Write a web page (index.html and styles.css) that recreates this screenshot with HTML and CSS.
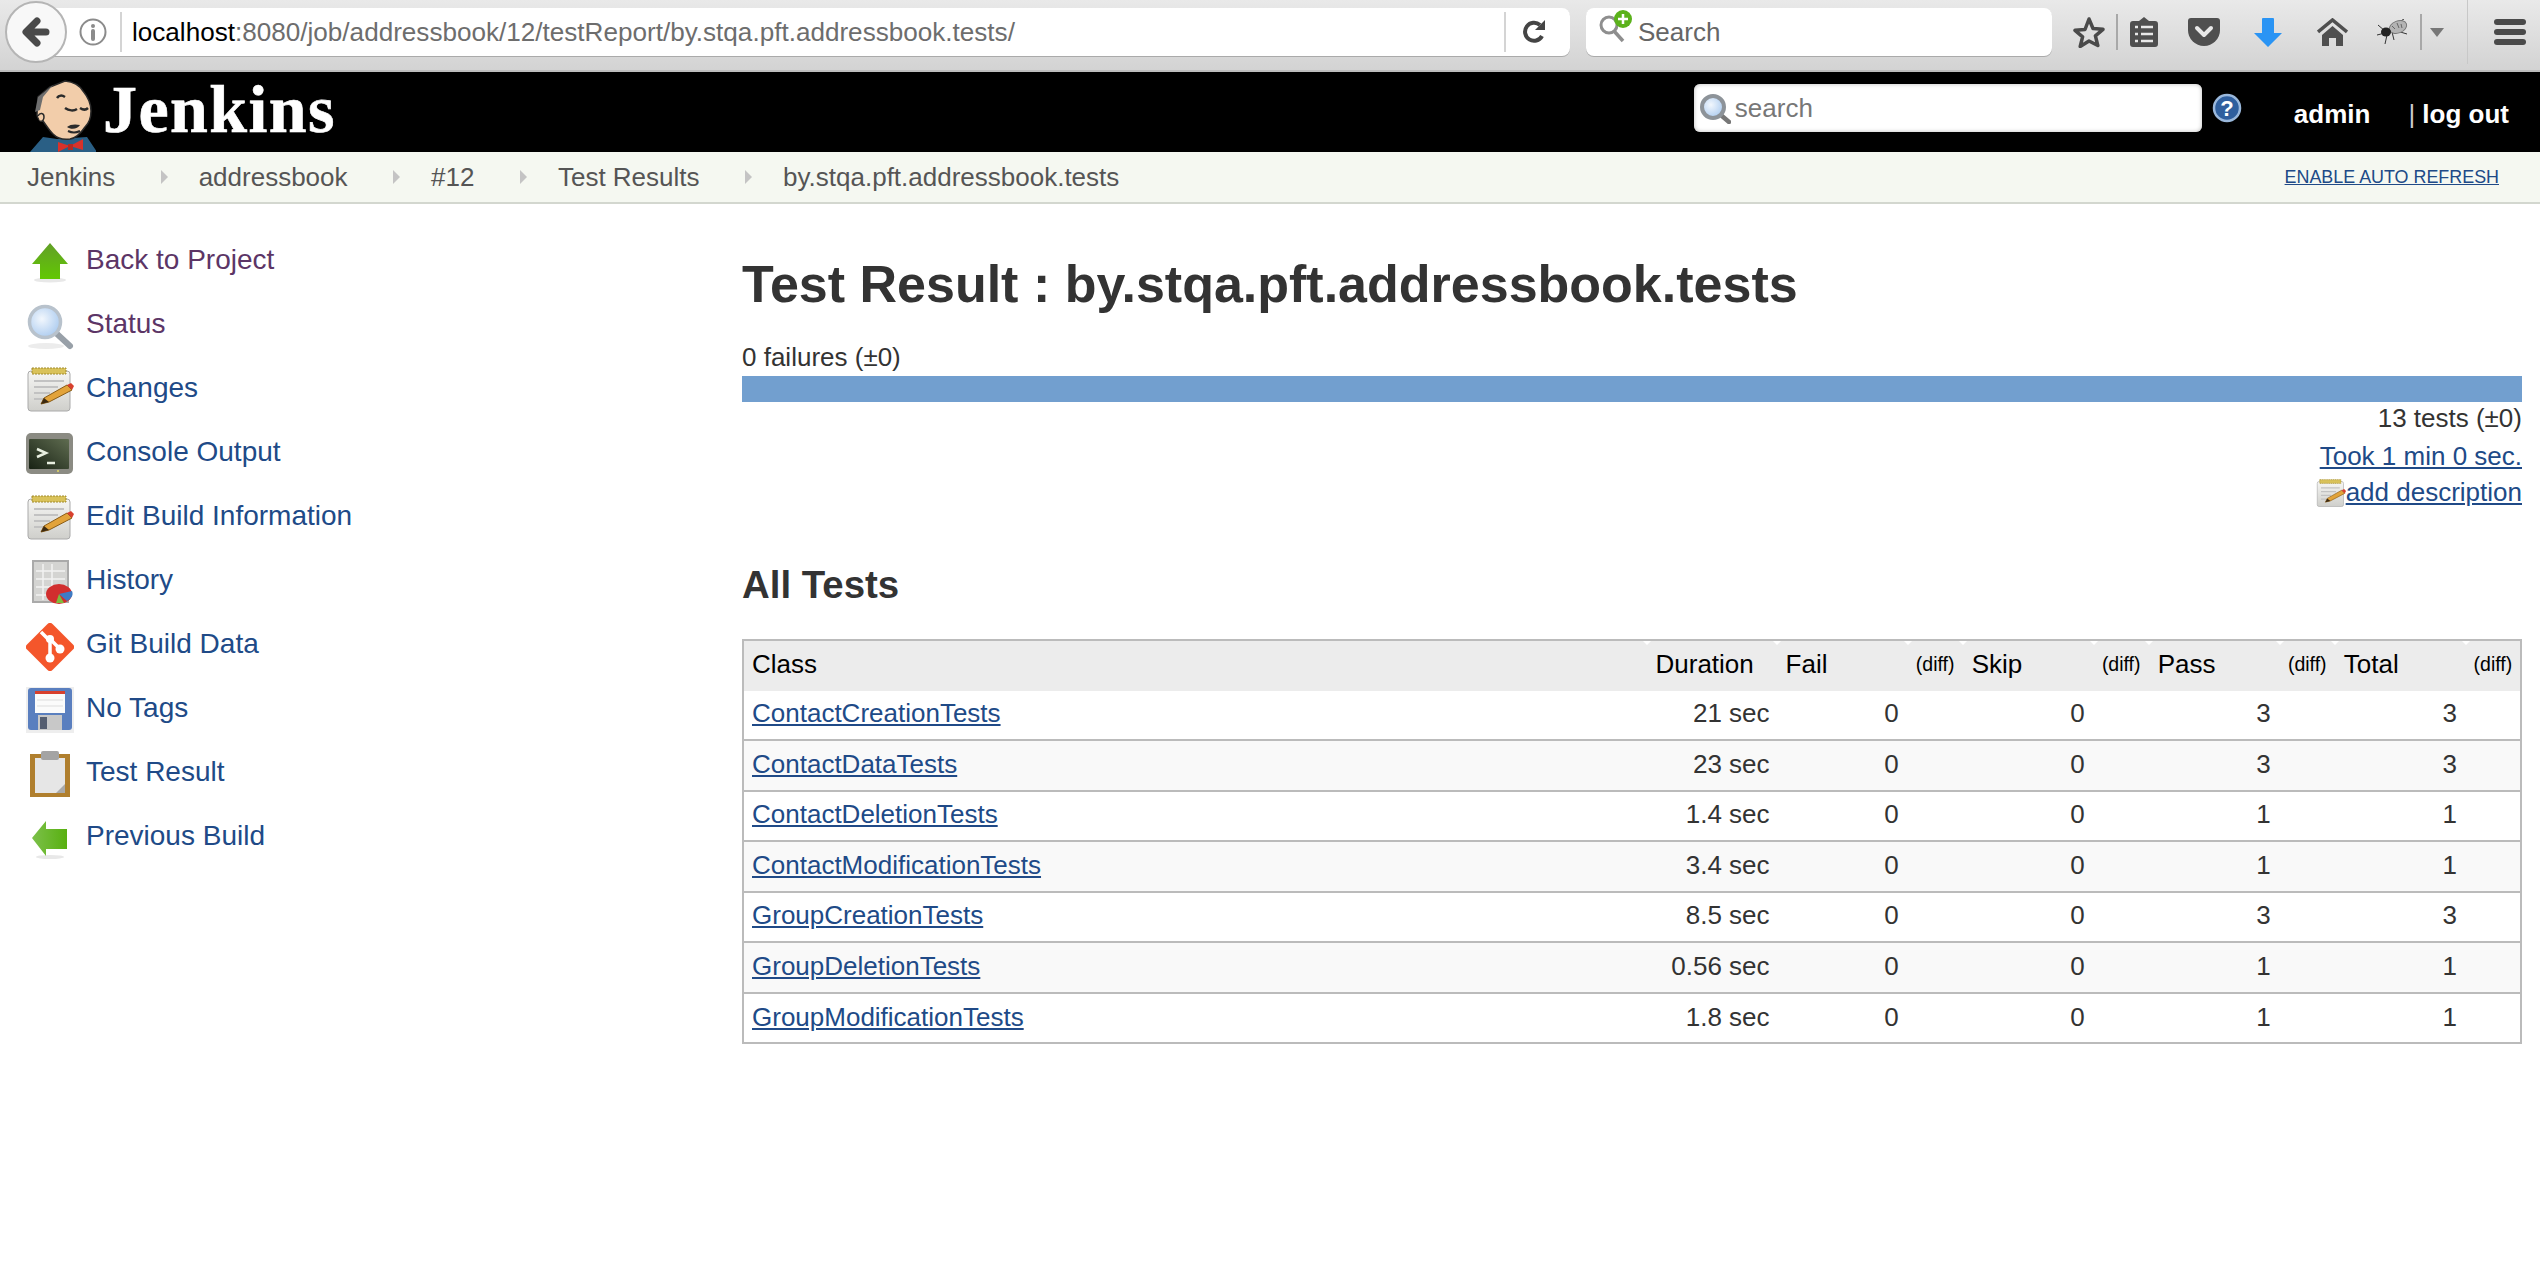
FILE: index.html
```html
<!DOCTYPE html>
<html lang="en">
<head>
	<meta charset="UTF-8">
	<title>by.stqa.pft.addressbook.tests Test Results</title>
	<link rel="stylesheet" href="styles.css">
</head>
<body>

<svg class="defs" width="0" height="0">
	<defs>
		<linearGradient id="greenUp" x1="0" y1="0" x2="0" y2="1"><stop offset="0" stop-color="#629f28"/><stop offset="1" stop-color="#62c802"/></linearGradient>
		<linearGradient id="greenLeft" x1="0" y1="0" x2="1" y2="0"><stop offset="0" stop-color="#7cc04a"/><stop offset="1" stop-color="#58b010"/></linearGradient>
		<linearGradient id="paper" x1="0" y1="0" x2="0" y2="1"><stop offset="0" stop-color="#f6f6f4"/><stop offset="1" stop-color="#cfcfcb"/></linearGradient>
		<linearGradient id="screen" x1="0" y1="1" x2="1" y2="0"><stop offset="0" stop-color="#182214"/><stop offset="1" stop-color="#5f6c50"/></linearGradient>
		<radialGradient id="lens" cx=".4" cy=".4" r=".7"><stop offset="0" stop-color="#f2f7fd"/><stop offset="1" stop-color="#a5c7ee"/></radialGradient>
		<symbol id="notepad" viewBox="0 0 48 48">
			<rect x="2" y="4" width="42" height="40" rx="3" fill="url(#paper)" stroke="#aaa"/>
			<rect x="6" y="1" width="34" height="6" fill="#d9c25a" stroke="#a08a2a" stroke-dasharray="2 1"/>
			<path d="M8 14h30M8 20h24M8 26h16M8 32h10" stroke="#c2c2c2" stroke-width="2"/>
			<path d="M15 37l3-6 23-13 5 5-23 12z" fill="#e2a33a" stroke="#8a5c16"/>
			<path d="M41 18l5 5 2-4-3-3z" fill="#d8402e"/>
			<path d="M15 37l3-6 5 4z" fill="#3c2a12"/>
		</symbol>
		<symbol id="magnifier" viewBox="0 0 48 48">
			<ellipse cx="20" cy="43" rx="18" ry="3" fill="#ececec"/>
			<path d="M30 30l14 13" stroke="#98a0a8" stroke-width="6" stroke-linecap="round"/>
			<circle cx="19" cy="19" r="15.500" fill="url(#lens)" stroke="#b8c2cc" stroke-width="3.500"/>
		</symbol>
	</defs>
</svg>

<div class="chrome">
	<div class="backBtn">
		<svg width="32" height="32" viewBox="0 0 32 32"><path d="M26 16H8M17 5L6 16l11 11" fill="none" stroke="#4a4a4a" stroke-width="7" stroke-linecap="round" stroke-linejoin="round"/></svg>
	</div>
	<div class="urlBar">
		<svg class="infoIcon" width="28" height="28" viewBox="0 0 28 28"><circle cx="14" cy="14" r="12.500" fill="none" stroke="#8b8b8b" stroke-width="2"/><path d="M14 13v8" stroke="#8b8b8b" stroke-width="4" stroke-linecap="round"/><circle cx="14" cy="8" r="2" fill="#8b8b8b"/></svg>
		<span class="urlDivider"></span>
		<span class="urlText"><b>localhost</b>:8080/job/addressbook/12/testReport/by.stqa.pft.addressbook.tests/</span>
		<span class="urlDivider urlDividerEnd"></span>
		<svg class="reloadIcon" width="26" height="26" viewBox="0 0 26 26"><path d="M21 17a9 9 0 1 1-2-11" fill="none" stroke="#444" stroke-width="4"/><path d="M14 11h10V1z" fill="#444"/></svg>
	</div>
	<div class="webSearch">
		<svg class="engineIcon" width="36" height="36" viewBox="0 0 36 36"><circle cx="11" cy="15" r="8" fill="none" stroke="#8e8e8e" stroke-width="3"/><path d="M16 21l9 10" stroke="#8e8e8e" stroke-width="3.500"/><circle cx="25" cy="9" r="9" fill="#5bb21b"/><path d="M25 4v10M20 9h10" stroke="#fff" stroke-width="2.500"/></svg>
		<span>Search</span>
	</div>
	<div class="tools">
		<svg class="tool toolStar" width="32" height="32" viewBox="0 0 32 32"><path d="M16 3l4 9.500 10 .8-7.600 6.500 2.400 9.700L16 25l-8.800 5.500 2.400-9.700L2 14.300l10-.8z" fill="none" stroke="#4a4a4a" stroke-width="3.500" stroke-linejoin="round"/></svg>
		<span class="toolDivider"></span>
		<svg class="tool toolList" width="28" height="30" viewBox="0 0 28 30"><path d="M14 0l5 4h6a3 3 0 0 1 3 3v20a3 3 0 0 1-3 3H3a3 3 0 0 1-3-3V7a3 3 0 0 1 3-3h6z" fill="#4f4f4f"/><path d="M5 10h3M11 10h12M5 17h3M11 17h12M5 24h3M11 24h12" stroke="#e8e8e8" stroke-width="2.500"/></svg>
		<svg class="tool toolPocket" width="32" height="28" viewBox="0 0 32 28"><path d="M3 0h26a3 3 0 0 1 3 3v9a16 16 0 0 1-32 0V3a3 3 0 0 1 3-3z" fill="#4f4f4f"/><path d="M9 10l7 7 7-7" fill="none" stroke="#e8e8e8" stroke-width="4" stroke-linecap="round" stroke-linejoin="round"/></svg>
		<svg class="tool toolDown" width="28" height="29" viewBox="0 0 28 29"><path d="M8 1a1 1 0 0 1 1-1h10a1 1 0 0 1 1 1v14h8L14 29 0 15h8z" fill="#2a94f4"/></svg>
		<svg class="tool toolHome" width="31" height="28" viewBox="0 0 31 28"><path d="M1 14L15.500 2 30 14" fill="none" stroke="#4f4f4f" stroke-width="3.500"/><path d="M15.500 8L26 17v11h-7V20h-7v8H5V17z" fill="#4f4f4f"/></svg>
		<svg class="tool toolBug" width="31" height="26" viewBox="0 0 31 26"><path d="M8 12L1 6M8 14L0 16M10 16L8 25M15 13l2 8M20 12l10 3M22 3l5-3" stroke="#333" fill="none"/><ellipse cx="21" cy="8" rx="9" ry="6" fill="#b4b4b4" stroke="#777" transform="rotate(-20 21 8)"/><path d="M15 7l3 3M20 4l2 5M24 5l1 4" stroke="#666"/><ellipse cx="9" cy="13" rx="5" ry="4.500" fill="#222"/></svg>
		<span class="toolDivider toolDividerBug"></span>
		<span class="toolCaret"></span>
		<span class="toolSep"></span>
		<div class="hamburger"><span></span><span></span><span></span></div>
	</div>
</div>

<div class="header">
	<a class="logo">
		<svg width="68" height="72" viewBox="0 0 68 72">
			<path d="M2 72l13-15 14 2 30-2 10 15z" fill="#2a5f85"/>
			<path d="M22 7L37 1c9 1 15 5 18 10 5 6 8 13 8 20 0 7-2 12-6 16-4 6-9 11-15 12-7 1-13-1-17-5-4-4-7-9-10-13-3 1-5-2-6-6 0-4 0-9 1-18z" fill="#f2cdaa" stroke="#2b2b2b" stroke-width="1.500"/>
			<path d="M25 5L10 17 7 32l5-2 3-13z" fill="#6e6e6e"/>
			<path d="M10 36c2-4 6-3 6 1 0 3-2 5-4 4" fill="#f2cdaa" stroke="#2b2b2b" stroke-width="1.500"/>
			<path d="M29 18c2-3 5-3 8-1" fill="none" stroke="#2b2b2b" stroke-width="2.500"/>
			<path d="M37 28c4 3 9 3 12 1M52 28c3 2 6 2 8 0" fill="none" stroke="#2b2b2b" stroke-width="2.500"/>
			<path d="M39 47c3-3 9-3 13-2-2 4-9 5-13 2z" fill="#2b2b2b"/>
			<path d="M40 51c4 2 8 2 12 0" fill="none" stroke="#2b2b2b" stroke-width="2"/>
			<path d="M30 62l12 4-12 6zM55 59l-13 7 13 4z" fill="#d8322a"/>
			<path d="M40 64h5v6h-5z" fill="#b52a22"/>
		</svg>
		<span class="logoText">Jenkins</span>
	</a>
	<div class="headerSearch">
		<svg width="32" height="32" viewBox="0 0 32 32"><path d="M23 24l7 6" stroke="#777" stroke-width="4.500" stroke-linecap="round"/><circle cx="14" cy="15" r="11" fill="url(#lens)" stroke="#8d9399" stroke-width="4"/></svg>
		<span>search</span>
	</div>
	<svg class="helpIcon" width="30" height="32" viewBox="0 0 30 32"><circle cx="15" cy="16" r="13" fill="#2f5f9e" stroke="#9ab8dc" stroke-width="2.500"/><text x="15" y="24" class="helpMark">?</text></svg>
	<a class="userLink">admin</a>
	<a class="logoutLink"><span class="logoutBar">|</span> log out</a>
</div>

<div class="breadcrumbs">
	<a>Jenkins</a><span class="crumbArrow"></span>
	<a>addressbook</a><span class="crumbArrow"></span>
	<a>#12</a><span class="crumbArrow"></span>
	<a>Test Results</a><span class="crumbArrow"></span>
	<a>by.stqa.pft.addressbook.tests</a>
	<a class="autoRefresh">ENABLE AUTO REFRESH</a>
</div>

<div class="page">
	<div class="sidePanel">
		<a class="task visited">
			<svg width="48" height="48" viewBox="0 0 48 48"><ellipse cx="24" cy="41" rx="16" ry="2.500" fill="#e8e8e8"/><path d="M24 4l18 21H34v15H14V25H6z" fill="url(#greenUp)"/></svg>
			Back to Project
		</a>
		<a class="task visited">
			<svg width="48" height="48" viewBox="0 0 48 48"><use href="#magnifier"/></svg>
			Status
		</a>
		<a class="task">
			<svg width="48" height="48" viewBox="0 0 48 48"><use href="#notepad"/></svg>
			Changes
		</a>
		<a class="task">
			<svg width="48" height="48" viewBox="0 0 48 48"><rect y="2" width="47" height="41" rx="5" fill="#8b8b83"/><rect x="3" y="8" width="40" height="30" rx="1" fill="url(#screen)"/><path d="M11 18l9 4-9 4" fill="none" stroke="#e8efe0" stroke-width="2.500"/><path d="M21 32h8" stroke="#e8efe0" stroke-width="2.500"/><circle cx="32" cy="40" r="1" fill="#e4d860"/></svg>
			Console Output
		</a>
		<a class="task">
			<svg width="48" height="48" viewBox="0 0 48 48"><use href="#notepad"/></svg>
			Edit Build Information
		</a>
		<a class="task">
			<svg width="48" height="48" viewBox="0 0 48 48"><rect x="7" y="2" width="35" height="41" fill="#d4d4d2" stroke="#aaa" stroke-width="2"/><path d="M10 12h29M10 20h29M10 28h29M10 36h29M17 5v36M26 5v36" stroke="#f2f2f2" stroke-width="1.500"/><ellipse cx="33" cy="35" rx="13" ry="10" fill="#d12e2e"/><path d="M33 35l13-3a13 9 0 0 1-5 10z" fill="#3e7bc4"/><path d="M33 35l5 9h-8z" fill="#7fbb3c"/></svg>
			History
		</a>
		<a class="task">
			<svg width="48" height="48" viewBox="0 0 48 48"><path d="M21.500 1a3.500 3.500 0 0 1 5 0l20.500 20.500a3.500 3.500 0 0 1 0 5L26.500 47a3.500 3.500 0 0 1-5 0L1 26.500a3.500 3.500 0 0 1 0-5z" fill="#f4562b"/><path d="M15 9l9 9M24 16v19M24 16l9 9" stroke="#fff" stroke-width="3.500" fill="none"/><circle cx="24" cy="16" r="4" fill="#fff"/><circle cx="24" cy="35" r="4.500" fill="#fff"/><circle cx="34" cy="26" r="4.500" fill="#fff"/></svg>
			Git Build Data
		</a>
		<a class="task">
			<svg width="48" height="48" viewBox="0 0 48 48"><rect width="48" height="46" fill="#eee"/><rect x="2" y="1" width="44" height="42" rx="3" fill="#5a7fbf"/><rect x="9" y="4" width="30" height="22" fill="#fbfbfb"/><rect x="9" y="4" width="30" height="3" fill="#d8402e"/><path d="M11 13h26M11 19h26" stroke="#ddd"/><rect x="12" y="28" width="24" height="15" fill="#c8c8c8"/><rect x="14" y="30" width="7" height="12" fill="#555e70"/></svg>
			No Tags
		</a>
		<a class="task">
			<svg width="48" height="48" viewBox="0 0 48 48"><rect x="4" y="3" width="40" height="43" fill="#b07f2e"/><rect x="9" y="7" width="30" height="35" fill="#e6e6e6"/><path d="M39 33v9H30z" fill="#aaa"/><rect x="15" y="0" width="18" height="9" rx="2" fill="#a4a4a4"/></svg>
			Test Result
		</a>
		<a class="task">
			<svg width="48" height="48" viewBox="0 0 48 48"><ellipse cx="24" cy="42" rx="14" ry="2" fill="#e8e8e8"/><path d="M6 23L20 6v8h21v20H20v7z" fill="url(#greenLeft)"/></svg>
			Previous Build
		</a>
	</div>

	<div class="mainPanel">
		<h1>Test Result : by.stqa.pft.addressbook.tests</h1>
		<div class="failCount">0 failures (±0)</div>
		<div class="resultBar"></div>
		<div class="resultMeta">
			<div>13 tests (±0)</div>
			<div><a>Took 1 min 0 sec.</a></div>
			<div class="addDesc">
				<svg width="30" height="30" viewBox="0 0 48 48"><use href="#notepad"/></svg><a>add description</a>
			</div>
		</div>
		<h2>All Tests</h2>
		<table id="testTable">
			<colgroup>
				<col class="colClass"><col class="colDuration">
				<col class="colNum"><col class="colDiff">
				<col class="colNum"><col class="colDiff">
				<col class="colNum"><col class="colDiff">
				<col class="colNum"><col class="colDiff">
			</colgroup>
			<thead>
				<tr>
					<th>Class</th><th class="durationHead">Duration</th>
					<th>Fail</th><th class="diff">(diff)</th>
					<th>Skip</th><th class="diff">(diff)</th>
					<th>Pass</th><th class="diff">(diff)</th>
					<th>Total</th><th class="diff">(diff)</th>
				</tr>
			</thead>
			<tbody>
				<tr><td><a>ContactCreationTests</a></td><td class="num time">21 sec</td><td class="num">0</td><td></td><td class="num">0</td><td></td><td class="num">3</td><td></td><td class="num">3</td><td></td></tr>
				<tr><td><a>ContactDataTests</a></td><td class="num time">23 sec</td><td class="num">0</td><td></td><td class="num">0</td><td></td><td class="num">3</td><td></td><td class="num">3</td><td></td></tr>
				<tr><td><a>ContactDeletionTests</a></td><td class="num time">1.4 sec</td><td class="num">0</td><td></td><td class="num">0</td><td></td><td class="num">1</td><td></td><td class="num">1</td><td></td></tr>
				<tr><td><a>ContactModificationTests</a></td><td class="num time">3.4 sec</td><td class="num">0</td><td></td><td class="num">0</td><td></td><td class="num">1</td><td></td><td class="num">1</td><td></td></tr>
				<tr><td><a>GroupCreationTests</a></td><td class="num time">8.5 sec</td><td class="num">0</td><td></td><td class="num">0</td><td></td><td class="num">3</td><td></td><td class="num">3</td><td></td></tr>
				<tr><td><a>GroupDeletionTests</a></td><td class="num time">0.56 sec</td><td class="num">0</td><td></td><td class="num">0</td><td></td><td class="num">1</td><td></td><td class="num">1</td><td></td></tr>
				<tr><td><a>GroupModificationTests</a></td><td class="num time">1.8 sec</td><td class="num">0</td><td></td><td class="num">0</td><td></td><td class="num">1</td><td></td><td class="num">1</td><td></td></tr>
			</tbody>
		</table>
	</div>
</div>

</body>
</html>
```

FILE: styles.css
```css
html, body {
	margin: 0;
	height: 100%;
	background-color: #fff;
}

body {
	font-family: "Liberation Sans", Arial, sans-serif;
	font-size: 26px;
	color: #333;
	overflow: hidden;
}

.defs {
	display: block;
	height: 0;
}

a {
	color: #204a87;
}

/* browser toolbar */
.chrome {
	display: flex;
	align-items: flex-start;
	height: 70px;
	padding-left: 5px;
	background: linear-gradient(#e9e9e9, #d3d3d3);
	border-bottom: 2px solid #bdbdbd;
}

.backBtn {
	display: flex;
	align-items: center;
	justify-content: center;
	flex: none;
	width: 58px;
	height: 58px;
	margin-top: 1px;
	border: 2px solid #b5b5b5;
	border-radius: 50%;
	background: #f8f8f8;
	z-index: 1;
}

.urlBar {
	display: flex;
	align-items: center;
	flex: none;
	width: 1540px;
	height: 48px;
	margin-left: -37px;
	margin-top: 8px;
	background: #fff;
	border-radius: 0 8px 8px 0;
	box-shadow: 0 1px 0 #aaa;
}

.infoIcon {
	margin-left: 49px;
}

.urlDivider {
	width: 2px;
	height: 40px;
	margin-left: 13px;
	background: #d4d4d4;
}

.urlDividerEnd {
	margin-left: 0;
}

.urlText {
	width: 1372px;
	margin-left: 10px;
	font-size: 26.100px;
	color: #6d6d6d;
	white-space: nowrap;
}

.urlText b {
	font-weight: normal;
	color: #000;
}

.reloadIcon {
	margin-left: 15px;
}

.webSearch {
	display: flex;
	align-items: center;
	flex: none;
	width: 466px;
	height: 48px;
	margin-left: 16px;
	margin-top: 8px;
	background: #fff;
	border-radius: 8px;
	box-shadow: 0 1px 0 #aaa;
	color: #666;
}

.engineIcon {
	margin-left: 12px;
	margin-top: -8px;
}

.webSearch span {
	margin-left: 4px;
}

.tools {
	display: flex;
	align-items: center;
	flex: 1;
	height: 64px;
}

.tool {
	flex: none;
}

.toolStar { margin-left: 21px; }
.toolList { margin-left: 12px; }
.toolPocket { margin-left: 30px; }
.toolDown { margin-left: 34px; }
.toolHome { margin-left: 35px; }
.toolBug { margin-left: 29px; }

.toolDivider {
	width: 2px;
	height: 36px;
	margin-left: 11px;
	background: #a8a8a8;
}

.toolDividerBug {
	margin-left: 12px;
}

.toolCaret {
	width: 0;
	height: 0;
	margin-left: 8px;
	border-left: 7px solid transparent;
	border-right: 7px solid transparent;
	border-top: 9px solid #777;
}

.toolSep {
	width: 1px;
	height: 64px;
	margin-left: 23px;
	background: #c8c8c8;
}

.hamburger {
	display: flex;
	flex-direction: column;
	gap: 4px;
	width: 32px;
	margin-left: 26px;
}

.hamburger span {
	height: 6px;
	border-radius: 3px;
	background: #4a4a4a;
}

/* jenkins header */
.header {
	display: flex;
	align-items: center;
	height: 80px;
	background: #000;
	color: #fff;
}

.logo {
	display: flex;
	align-items: flex-end;
	height: 80px;
	margin-left: 28px;
}

.logoText {
	align-self: center;
	margin-left: 7px;
	margin-top: -6px;
	font-family: "Liberation Serif", "Times New Roman", serif;
	font-size: 68px;
	font-weight: bold;
	letter-spacing: 1.400px;
	color: #fff;
	-webkit-text-stroke: 0.6px #fff;
}

.headerSearch {
	display: flex;
	align-items: center;
	box-sizing: border-box;
	width: 508px;
	height: 48px;
	margin-left: auto;
	margin-top: -8px;
	padding-left: 5px;
	background: #fff;
	border-radius: 6px;
	box-shadow: inset 0 0 4px #bbb;
	color: #777;
}

.headerSearch span {
	margin-left: 4px;
}

.helpIcon {
	margin-left: 10px;
	margin-top: -8px;
}

.helpMark {
	font-family: "Liberation Sans", sans-serif;
	font-size: 22px;
	font-weight: bold;
	text-anchor: middle;
	fill: #fff;
}

.userLink, .logoutLink {
	font-weight: bold;
	color: #fff;
}

.userLink {
	margin-left: 52px;
	margin-top: 4px;
}

.logoutLink {
	margin-left: 38px;
	margin-right: 31px;
	margin-top: 4px;
}

.logoutBar {
	font-weight: normal;
	color: #ccc;
}

/* breadcrumb bar */
.breadcrumbs {
	display: flex;
	align-items: center;
	box-sizing: border-box;
	height: 52px;
	padding: 0 41px 0 27px;
	background: #f5f8f1;
	border-bottom: 2px solid #d3d7cf;
	color: #555;
}

.breadcrumbs a {
	color: #555;
}

.crumbArrow {
	width: 0;
	height: 0;
	margin: 0 31px 0 45.500px;
	border-top: 7px solid transparent;
	border-bottom: 7px solid transparent;
	border-left: 7px solid #c4c4c4;
}

.breadcrumbs .autoRefresh {
	margin-left: auto;
	font-size: 17.900px;
	color: #204a87;
	text-decoration: underline;
}

/* page */
.page {
	display: flex;
	padding-top: 24px;
}

.sidePanel {
	display: flex;
	flex-direction: column;
	flex: none;
	box-sizing: border-box;
	width: 742px;
	padding-left: 26px;
}

.task {
	display: flex;
	align-items: center;
	gap: 12px;
	height: 64px;
	font-size: 28px;
	text-decoration: none;
}

.task svg {
	margin-top: 6px;
}

.task.visited {
	color: #5c3566;
}

.mainPanel {
	flex: 1;
	margin-right: 18px;
}

h1 {
	margin: 0;
	padding-top: 26px;
	font-size: 52px;
	line-height: 60px;
	color: #333;
}

.failCount {
	margin-top: 28px;
	line-height: 30px;
}

.resultBar {
	height: 26px;
	margin-top: 4px;
	background: #729fcf;
}

.resultMeta {
	text-align: right;
}

.resultMeta > div {
	height: 36.500px;
	line-height: 32px;
}

.resultMeta > div:first-child {
	height: 37.500px;
}

.resultMeta a {
	text-decoration: underline;
}

.addDesc {
	display: flex;
	justify-content: flex-end;
	align-items: flex-start;
}

.addDesc svg {
	margin-top: 3px;
}

h2 {
	margin: 49px 0 0;
	font-size: 38.400px;
	line-height: 46px;
	color: #333;
}

#testTable {
	width: 100%;
	margin-top: 31px;
	table-layout: fixed;
	border-collapse: collapse;
	border: 2px solid #bbb;
}

.colClass { width: 903px; }
.colDuration { width: 130px; }
.colNum { width: 131px; }
.colDiff { width: 55px; }

th {
	position: relative;
	height: 48px;
	padding: 0 8px 2px 9px;
	font-weight: normal;
	text-align: left;
	color: #000;
	background: #ececec;
	white-space: nowrap;
}

th:first-child {
	padding-left: 8px;
}

th::after {
	content: "";
	position: absolute;
	top: 0;
	right: -4px;
	border-left: 4px solid transparent;
	border-right: 4px solid transparent;
	border-top: 4px solid #fff;
	z-index: 1;
}

th:last-child::after {
	display: none;
}

th.diff {
	padding: 0 0 2px;
	text-align: center;
	font-size: 19.500px;
}

td {
	height: 46.550px;
	padding: 0 8px 2px;
	border-bottom: 2px solid #bbb;
}

tbody tr:nth-child(even) td {
	background: #f9f9f9;
}

td a {
	text-decoration: underline;
}

td.num {
	padding-right: 9px;
	text-align: right;
}

td.time {
	padding-right: 7px;
}
```
